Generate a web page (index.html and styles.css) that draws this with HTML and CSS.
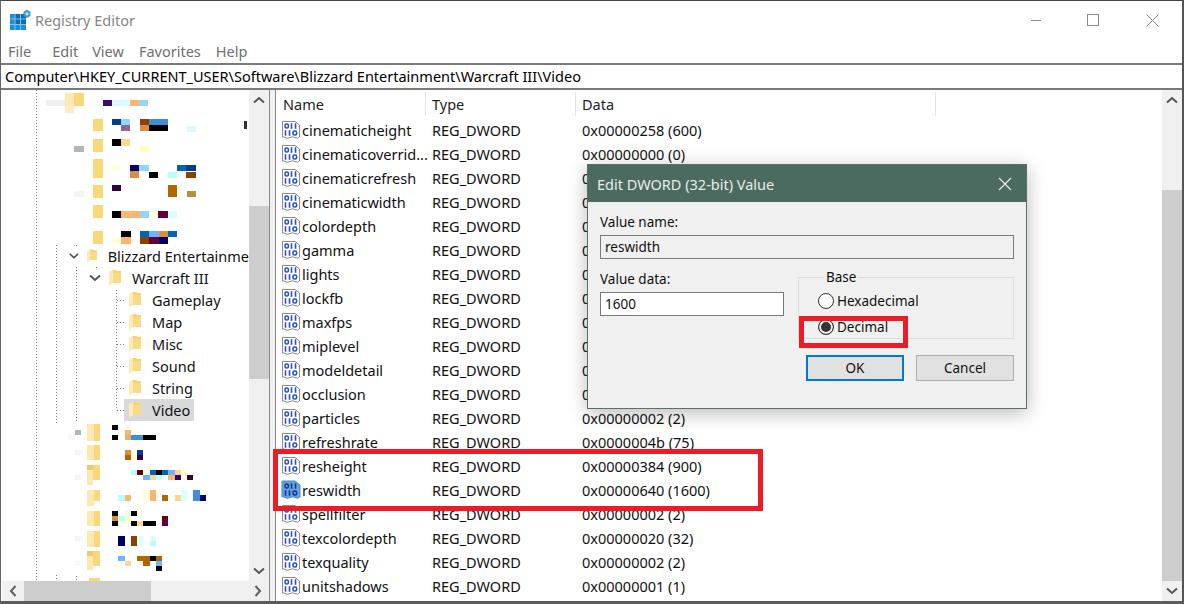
FILE: index.html
```html
<!DOCTYPE html>
<html lang="en">
<head>
    <meta charset="UTF-8">
    <title>Registry Editor</title>
    <link rel="stylesheet" href="styles.css">
</head>
<body>
    <!-- Shared icons -->
    <svg class="defs" width="0" height="0">
        <symbol id="folder" viewBox="0 0 12 16">
            <path d="M3 0 H7 L8 1 H12 V13 H3 Z" fill="#f7d26e"/>
            <path d="M0 1.5 L4 0 V13 L0 16 Z" fill="#fdeab8"/>
            <path d="M4 3 H12 V13 H4 Z" fill="#fadb85"/>
        </symbol>
        <symbol id="dword" viewBox="0 0 20 20">
            <path d="M1.5 1.5 H14 L18.5 5 V17 Q16.5 19 14 17.5 T9 17.5 T4 17.5 T1.5 17 Z" fill="#fff" stroke="#8c8c8c"/>
            <g fill="none" stroke="#2c52ba" stroke-width="1.6">
                <rect x="4" y="4" width="3.4" height="4" rx="1.5"/>
                <path d="M10.5 3.2 V8.8 M14.5 3.2 V8.8"/>
                <path d="M4.5 10.2 V15.8 M8.5 10.2 V15.8"/>
                <rect x="12" y="11" width="3.6" height="4" rx="1.5"/>
            </g>
        </symbol>
        <symbol id="dword-selected" viewBox="0 0 20 20">
            <path d="M1 1 H14 L19 5 V17 Q16.5 19 14 17.5 T9 17.5 T4 17.5 T1 17 Z" fill="#63a5e0" stroke="#4a86c5"/>
            <g fill="none" stroke="#17358f" stroke-width="1.6">
                <rect x="4" y="4" width="3.4" height="4" rx="1.5"/>
                <path d="M10.5 3.2 V8.8 M14.5 3.2 V8.8"/>
                <path d="M4.5 10.2 V15.8 M8.5 10.2 V15.8"/>
                <rect x="12" y="11" width="3.6" height="4" rx="1.5"/>
            </g>
        </symbol>
        <symbol id="chevron-down" viewBox="0 0 12 8">
            <path d="M1 1.5 L6 6 L11 1.5" fill="none" stroke="#555" stroke-width="2"/>
        </symbol>
        <symbol id="chevron-up" viewBox="0 0 12 8">
            <path d="M1 6.5 L6 2 L11 6.5" fill="none" stroke="#555" stroke-width="2"/>
        </symbol>
        <symbol id="chevron-left" viewBox="0 0 8 12">
            <path d="M6.5 1 L2 6 L6.5 11" fill="none" stroke="#606060" stroke-width="2"/>
        </symbol>
        <symbol id="chevron-right" viewBox="0 0 8 12">
            <path d="M1.5 1 L6 6 L1.5 11" fill="none" stroke="#606060" stroke-width="2"/>
        </symbol>
    </svg>

    <div class="window">
        <!-- Title bar -->
        <div class="titlebar">
            <svg class="app-icon" width="22" height="22" viewBox="0 0 22 22">
                <rect x="1" y="5" width="16" height="16" fill="#1c8fd6"/>
                <rect x="6" y="5" width="11" height="10" fill="#0f6cb0"/>
                <path d="M1 10 H17 M1 15.500 H17 M6 5 V21 M11.500 5 V21" stroke="#7cc4ee" stroke-width="1"/>
                <path d="M18 0.500 L21.500 3 V7 L18 9 L14.500 7 V3 Z" fill="#3e9bd4"/>
                <circle cx="18" cy="4.800" r="1.600" fill="#bfe2f6"/>
            </svg>
            <span class="app-title">Registry Editor</span>
            <div class="win-controls">
                <span class="win-min"></span>
                <span class="win-max"></span>
                <svg class="win-close" width="13" height="13" viewBox="0 0 13 13">
                    <path d="M0.500 0.500 L12.500 12.500 M12.500 0.500 L0.500 12.500" stroke="#8c8c8c" stroke-width="1"/>
                </svg>
            </div>
        </div>

        <!-- Menu -->
        <div class="menubar">
            <span class="menu-file">File</span>
            <span class="menu-edit">Edit</span>
            <span class="menu-view">View</span>
            <span class="menu-fav">Favorites</span>
            <span>Help</span>
        </div>

        <!-- Address bar -->
        <div class="address">Computer\HKEY_CURRENT_USER\Software\Blizzard Entertainment\Warcraft III\Video</div>

        <div class="main">
            <!-- Key tree -->
            <div class="tree-pane">
                <div class="tree-top">
                    <div class="tree">
                        <svg class="tree-lines" width="247" height="491" viewBox="2 90 247 491">
                            <g fill="none" stroke="#808080" stroke-dasharray="1 2">
                                <path d="M36.500 90 V581"/>
                                <path d="M56.500 245 V424 M56.500 575 V581"/>
                                <path d="M76.500 245 V248 M76.500 267 V421 M76.500 576 V581"/>
                                <path d="M96.500 267 V270"/>
                                <path d="M116.500 290 V410"/>
                                <path d="M117 300.500 H126 M117 322.500 H126 M117 344.500 H126 M117 366.500 H126 M117 388.500 H126 M117 410.500 H126"/>
                            </g>
                        </svg>

                        <!-- Blurred keys above the open branch -->
                        <svg class="mosaic" viewBox="2 91 247 22">
                            <rect x="46" y="100" width="19" height="6" fill="#eeeeee"/>
                            <rect x="65" y="93" width="9" height="13" fill="#fde9b0"/>
                            <rect x="74" y="93" width="10" height="13" fill="#fad77b"/>
                            <rect x="65" y="106" width="9" height="7" fill="#fdeec5"/>
                            <rect x="103" y="100" width="9" height="6" fill="#3b0b6b"/>
                            <rect x="112" y="100" width="18" height="6" fill="#d9fbff"/>
                            <rect x="130" y="100" width="9" height="6" fill="#ffb56b"/>
                            <rect x="139" y="100" width="9" height="6" fill="#92d5ff"/>
                        </svg>
                        <svg class="mosaic" viewBox="2 113 247 22">
                            <rect x="93" y="119" width="10" height="12" fill="#f9d877"/>
                            <rect x="112" y="119" width="9" height="6" fill="#003d96"/>
                            <rect x="121" y="119" width="9" height="6" fill="#92d5ff"/>
                            <rect x="121" y="125" width="9" height="6" fill="#90649a"/>
                            <rect x="140" y="119" width="9" height="6" fill="#8f3f00"/>
                            <rect x="149" y="119" width="19" height="6" fill="#3d8fdb"/>
                            <rect x="140" y="125" width="9" height="6" fill="#db8f3d"/>
                            <rect x="149" y="125" width="19" height="6" fill="#000000"/>
                            <rect x="187" y="126" width="9" height="6" fill="#d9fbff"/>
                            <rect x="244" y="121" width="3" height="8" fill="#333333"/>
                        </svg>
                        <svg class="mosaic" viewBox="2 135 247 22">
                            <rect x="74" y="146" width="10" height="6" fill="#b5b5b5"/>
                            <rect x="93" y="139" width="10" height="13" fill="#f9d877"/>
                            <rect x="112" y="139" width="9" height="7" fill="#000000"/>
                            <rect x="121" y="139" width="9" height="7" fill="#fed68f"/>
                            <rect x="140" y="146" width="9" height="6" fill="#ffffb5"/>
                        </svg>
                        <svg class="mosaic" viewBox="2 157 247 22">
                            <rect x="93" y="159" width="10" height="19" fill="#f9d877"/>
                            <rect x="112" y="165" width="9" height="6" fill="#ffffdb"/>
                            <rect x="130" y="165" width="9" height="6" fill="#00006b"/>
                            <rect x="139" y="165" width="10" height="6" fill="#92d5ff"/>
                            <rect x="130" y="171" width="9" height="7" fill="#db8f3d"/>
                            <rect x="149" y="172" width="9" height="6" fill="#000000"/>
                            <rect x="168" y="172" width="9" height="6" fill="#b5ffff"/>
                            <rect x="177" y="165" width="9" height="6" fill="#0065b5"/>
                            <rect x="186" y="165" width="10" height="6" fill="#003d8f"/>
                            <rect x="186" y="172" width="10" height="6" fill="#8f3f00"/>
                        </svg>
                        <svg class="mosaic" viewBox="2 179 247 22">
                            <rect x="74" y="191" width="10" height="6" fill="#f5f5f5"/>
                            <rect x="93" y="185" width="10" height="13" fill="#f9d877"/>
                            <rect x="112" y="185" width="9" height="6" fill="#36003d"/>
                            <rect x="168" y="185" width="9" height="12" fill="#b56500"/>
                            <rect x="187" y="191" width="9" height="6" fill="#b5913d"/>
                        </svg>
                        <svg class="mosaic" viewBox="2 201 247 22">
                            <rect x="93" y="205" width="10" height="13" fill="#f9d877"/>
                            <rect x="112" y="211" width="9" height="7" fill="#000000"/>
                            <rect x="121" y="211" width="19" height="7" fill="#ffb56b"/>
                            <rect x="140" y="211" width="9" height="7" fill="#92d5ff"/>
                            <rect x="149" y="211" width="9" height="7" fill="#ffffdb"/>
                            <rect x="158" y="211" width="10" height="7" fill="#65003d"/>
                            <rect x="168" y="211" width="9" height="7" fill="#dbffff"/>
                        </svg>
                        <svg class="mosaic" viewBox="2 223 247 22">
                            <rect x="93" y="231" width="10" height="13" fill="#f9d877"/>
                            <rect x="121" y="231" width="10" height="6" fill="#000000"/>
                            <rect x="140" y="231" width="9" height="6" fill="#0065b5"/>
                            <rect x="149" y="231" width="10" height="6" fill="#6bb5ff"/>
                            <rect x="159" y="231" width="9" height="6" fill="#db8f3d"/>
                            <rect x="168" y="231" width="9" height="6" fill="#0065b5"/>
                            <rect x="112" y="237" width="9" height="7" fill="#ffffdb"/>
                            <rect x="121" y="237" width="10" height="7" fill="#ffb56b"/>
                            <rect x="140" y="237" width="9" height="7" fill="#8f3f00"/>
                            <rect x="149" y="237" width="10" height="7" fill="#65003d"/>
                            <rect x="159" y="237" width="9" height="7" fill="#00006b"/>
                        </svg>

                        <!-- Open branch -->
                        <div class="key depth-1">
                            <svg class="twist" width="12" height="8"><use href="#chevron-down"/></svg>
                            <svg class="folder" width="12" height="16"><use href="#folder"/></svg>
                            <span class="key-name">Blizzard Entertainme</span>
                        </div>
                        <div class="key depth-2">
                            <svg class="twist" width="12" height="8"><use href="#chevron-down"/></svg>
                            <svg class="folder" width="12" height="16"><use href="#folder"/></svg>
                            <span class="key-name">Warcraft III</span>
                        </div>
                        <div class="key depth-3">
                            <svg class="folder" width="12" height="16"><use href="#folder"/></svg>
                            <span class="key-name">Gameplay</span>
                        </div>
                        <div class="key depth-3">
                            <svg class="folder" width="12" height="16"><use href="#folder"/></svg>
                            <span class="key-name">Map</span>
                        </div>
                        <div class="key depth-3">
                            <svg class="folder" width="12" height="16"><use href="#folder"/></svg>
                            <span class="key-name">Misc</span>
                        </div>
                        <div class="key depth-3">
                            <svg class="folder" width="12" height="16"><use href="#folder"/></svg>
                            <span class="key-name">Sound</span>
                        </div>
                        <div class="key depth-3">
                            <svg class="folder" width="12" height="16"><use href="#folder"/></svg>
                            <span class="key-name">String</span>
                        </div>
                        <div class="key depth-3 selected">
                            <svg class="folder" width="12" height="16"><use href="#folder"/></svg>
                            <span class="key-name">Video</span>
                        </div>

                        <!-- Blurred keys below the open branch -->
                        <svg class="mosaic" viewBox="2 421 247 22">
                            <rect x="68" y="435" width="7" height="5" fill="#f8f8f8"/>
                            <rect x="75" y="430" width="6" height="5" fill="#b5b5b5"/>
                            <rect x="87" y="424" width="7" height="17" fill="#fde9b0"/>
                            <rect x="94" y="424" width="6" height="17" fill="#fad77b"/>
                            <rect x="112" y="425" width="6" height="5" fill="#000000"/>
                            <rect x="112" y="435" width="6" height="5" fill="#000000"/>
                            <rect x="125" y="430" width="6" height="5" fill="#ffb56b"/>
                            <rect x="125" y="435" width="6" height="5" fill="#dbb56b"/>
                            <rect x="131" y="435" width="12" height="5" fill="#3d8fdb"/>
                            <rect x="143" y="435" width="13" height="5" fill="#000000"/>
                        </svg>
                        <svg class="mosaic" viewBox="2 443 247 22">
                            <rect x="75" y="450" width="6" height="5" fill="#f5f5f5"/>
                            <rect x="87" y="445" width="7" height="15" fill="#fde9b0"/>
                            <rect x="94" y="445" width="6" height="15" fill="#fad77b"/>
                            <rect x="125" y="450" width="6" height="5" fill="#db8f3d"/>
                            <rect x="125" y="455" width="6" height="5" fill="#b56500"/>
                            <rect x="131" y="450" width="6" height="10" fill="#ffffdb"/>
                            <rect x="137" y="450" width="6" height="5" fill="#003d8f"/>
                            <rect x="137" y="455" width="6" height="5" fill="#36003d"/>
                        </svg>
                        <svg class="mosaic" viewBox="2 465 247 22">
                            <rect x="75" y="475" width="6" height="5" fill="#f5f5f5"/>
                            <rect x="87" y="465" width="6" height="5" fill="#f0c870"/>
                            <rect x="87" y="470" width="6" height="15" fill="#fde9b0"/>
                            <rect x="93" y="465" width="7" height="15" fill="#fad77b"/>
                            <rect x="131" y="470" width="6" height="5" fill="#b5ffff"/>
                            <rect x="137" y="470" width="6" height="5" fill="#650000"/>
                            <rect x="150" y="470" width="6" height="5" fill="#0065b5"/>
                            <rect x="156" y="470" width="6" height="5" fill="#000000"/>
                            <rect x="162" y="470" width="6" height="5" fill="#0065b5"/>
                            <rect x="168" y="470" width="7" height="5" fill="#6bb5ff"/>
                            <rect x="175" y="470" width="6" height="5" fill="#fed68f"/>
                            <rect x="181" y="470" width="6" height="10" fill="#ffffdb"/>
                            <rect x="143" y="475" width="7" height="5" fill="#6bb5ff"/>
                            <rect x="150" y="475" width="6" height="5" fill="#fed68f"/>
                            <rect x="156" y="475" width="6" height="5" fill="#b5ffff"/>
                            <rect x="168" y="475" width="7" height="5" fill="#ffb56b"/>
                            <rect x="175" y="475" width="6" height="5" fill="#36006b"/>
                            <rect x="187" y="475" width="6" height="5" fill="#36003d"/>
                        </svg>
                        <svg class="mosaic" viewBox="2 487 247 22">
                            <rect x="87" y="490" width="7" height="16" fill="#fde9b0"/>
                            <rect x="94" y="490" width="6" height="11" fill="#fad77b"/>
                            <rect x="118" y="495" width="7" height="6" fill="#b5ffff"/>
                            <rect x="125" y="495" width="6" height="6" fill="#ffb56b"/>
                            <rect x="143" y="490" width="7" height="11" fill="#ffffdb"/>
                            <rect x="150" y="490" width="6" height="11" fill="#ffb56b"/>
                            <rect x="162" y="495" width="6" height="6" fill="#b56500"/>
                            <rect x="175" y="495" width="6" height="6" fill="#fed68f"/>
                            <rect x="181" y="490" width="6" height="11" fill="#dbffff"/>
                            <rect x="193" y="490" width="7" height="11" fill="#3d8fdb"/>
                            <rect x="200" y="495" width="6" height="6" fill="#00006b"/>
                        </svg>
                        <svg class="mosaic" viewBox="2 509 247 22">
                            <rect x="87" y="511" width="7" height="15" fill="#fde9b0"/>
                            <rect x="94" y="511" width="6" height="15" fill="#fad77b"/>
                            <rect x="112" y="511" width="6" height="5" fill="#000000"/>
                            <rect x="125" y="511" width="6" height="5" fill="#dbffff"/>
                            <rect x="131" y="511" width="6" height="5" fill="#000000"/>
                            <rect x="112" y="516" width="6" height="5" fill="#db8f3d"/>
                            <rect x="118" y="516" width="7" height="5" fill="#b5ffff"/>
                            <rect x="125" y="516" width="6" height="5" fill="#ffffb5"/>
                            <rect x="112" y="521" width="6" height="5" fill="#000000"/>
                            <rect x="118" y="521" width="7" height="5" fill="#ffffdb"/>
                            <rect x="131" y="521" width="6" height="5" fill="#000000"/>
                            <rect x="137" y="521" width="6" height="5" fill="#fed68f"/>
                            <rect x="143" y="521" width="13" height="5" fill="#000000"/>
                            <rect x="162" y="516" width="6" height="5" fill="#650000"/>
                            <rect x="162" y="521" width="6" height="5" fill="#65003d"/>
                        </svg>
                        <svg class="mosaic" viewBox="2 531 247 22">
                            <rect x="75" y="536" width="6" height="5" fill="#f5f5f5"/>
                            <rect x="87" y="531" width="7" height="16" fill="#fde9b0"/>
                            <rect x="94" y="531" width="6" height="16" fill="#fad77b"/>
                            <rect x="118" y="536" width="7" height="10" fill="#00006b"/>
                            <rect x="131" y="536" width="6" height="10" fill="#8f3f00"/>
                            <rect x="137" y="536" width="6" height="10" fill="#dbffff"/>
                            <rect x="150" y="536" width="6" height="5" fill="#dbffff"/>
                            <rect x="150" y="541" width="6" height="5" fill="#b5ffff"/>
                        </svg>
                        <svg class="mosaic" viewBox="2 553 247 22">
                            <rect x="75" y="561" width="6" height="5" fill="#f8f8f8"/>
                            <rect x="87" y="551" width="6" height="5" fill="#f0c870"/>
                            <rect x="87" y="556" width="6" height="14" fill="#fde9b0"/>
                            <rect x="93" y="551" width="7" height="15" fill="#fad77b"/>
                            <rect x="118" y="556" width="7" height="5" fill="#6bb5ff"/>
                            <rect x="137" y="556" width="19" height="5" fill="#b56500"/>
                            <rect x="150" y="556" width="6" height="5" fill="#000000"/>
                            <rect x="156" y="556" width="6" height="5" fill="#b56500"/>
                            <rect x="125" y="561" width="6" height="5" fill="#fed68f"/>
                            <rect x="143" y="561" width="7" height="5" fill="#b56500"/>
                            <rect x="156" y="561" width="6" height="5" fill="#6bb5ff"/>
                            <rect x="156" y="566" width="6" height="5" fill="#000000"/>
                        </svg>
                        <svg class="mosaic" viewBox="2 575 247 22">
                            <rect x="89" y="578" width="11" height="3" fill="#f9d877"/>
                        </svg>
                    </div>
                    <div class="vscroll tree-vscroll">
                        <div class="arrow-box"><svg width="12" height="8"><use href="#chevron-up"/></svg></div>
                        <div class="thumb"></div>
                        <div class="arrow-box"><svg width="12" height="8"><use href="#chevron-down"/></svg></div>
                    </div>
                </div>
                <div class="hscroll">
                    <div class="arrow-box side"><svg width="8" height="12"><use href="#chevron-left"/></svg></div>
                    <div class="thumb"></div>
                    <div class="arrow-box side"><svg width="8" height="12"><use href="#chevron-right"/></svg></div>
                </div>
            </div>

            <div class="splitter"></div>

            <!-- Values list -->
            <div class="list-pane">
                <div class="list">
                    <div class="list-head">
                        <span class="col-name">Name</span>
                        <span class="col-type">Type</span>
                        <span class="col-data">Data</span>
                    </div>
                    <div class="row"><svg width="20" height="20"><use href="#dword"/></svg><span class="val-name">cinematicheight</span><span class="val-type">REG_DWORD</span><span>0x00000258 (600)</span></div>
                    <div class="row"><svg width="20" height="20"><use href="#dword"/></svg><span class="val-name">cinematicoverrid...</span><span class="val-type">REG_DWORD</span><span>0x00000000 (0)</span></div>
                    <div class="row"><svg width="20" height="20"><use href="#dword"/></svg><span class="val-name">cinematicrefresh</span><span class="val-type">REG_DWORD</span><span>0</span></div>
                    <div class="row"><svg width="20" height="20"><use href="#dword"/></svg><span class="val-name">cinematicwidth</span><span class="val-type">REG_DWORD</span><span>0</span></div>
                    <div class="row"><svg width="20" height="20"><use href="#dword"/></svg><span class="val-name">colordepth</span><span class="val-type">REG_DWORD</span><span>0</span></div>
                    <div class="row"><svg width="20" height="20"><use href="#dword"/></svg><span class="val-name">gamma</span><span class="val-type">REG_DWORD</span><span>0</span></div>
                    <div class="row"><svg width="20" height="20"><use href="#dword"/></svg><span class="val-name">lights</span><span class="val-type">REG_DWORD</span><span>0</span></div>
                    <div class="row"><svg width="20" height="20"><use href="#dword"/></svg><span class="val-name">lockfb</span><span class="val-type">REG_DWORD</span><span>0</span></div>
                    <div class="row"><svg width="20" height="20"><use href="#dword"/></svg><span class="val-name">maxfps</span><span class="val-type">REG_DWORD</span><span>0</span></div>
                    <div class="row"><svg width="20" height="20"><use href="#dword"/></svg><span class="val-name">miplevel</span><span class="val-type">REG_DWORD</span><span>0</span></div>
                    <div class="row"><svg width="20" height="20"><use href="#dword"/></svg><span class="val-name">modeldetail</span><span class="val-type">REG_DWORD</span><span>0</span></div>
                    <div class="row"><svg width="20" height="20"><use href="#dword"/></svg><span class="val-name">occlusion</span><span class="val-type">REG_DWORD</span><span>0</span></div>
                    <div class="row"><svg width="20" height="20"><use href="#dword"/></svg><span class="val-name">particles</span><span class="val-type">REG_DWORD</span><span>0x00000002 (2)</span></div>
                    <div class="row"><svg width="20" height="20"><use href="#dword"/></svg><span class="val-name">refreshrate</span><span class="val-type">REG_DWORD</span><span>0x0000004b (75)</span></div>
                    <div class="row"><svg width="20" height="20"><use href="#dword"/></svg><span class="val-name">resheight</span><span class="val-type">REG_DWORD</span><span>0x00000384 (900)</span></div>
                    <div class="row"><svg width="20" height="20"><use href="#dword-selected"/></svg><span class="val-name">reswidth</span><span class="val-type">REG_DWORD</span><span>0x00000640 (1600)</span></div>
                    <div class="row"><svg width="20" height="20"><use href="#dword"/></svg><span class="val-name">spellfilter</span><span class="val-type">REG_DWORD</span><span>0x00000002 (2)</span></div>
                    <div class="row"><svg width="20" height="20"><use href="#dword"/></svg><span class="val-name">texcolordepth</span><span class="val-type">REG_DWORD</span><span>0x00000020 (32)</span></div>
                    <div class="row"><svg width="20" height="20"><use href="#dword"/></svg><span class="val-name">texquality</span><span class="val-type">REG_DWORD</span><span>0x00000002 (2)</span></div>
                    <div class="row"><svg width="20" height="20"><use href="#dword"/></svg><span class="val-name">unitshadows</span><span class="val-type">REG_DWORD</span><span>0x00000001 (1)</span></div>
                </div>
                <div class="vscroll list-vscroll">
                    <div class="arrow-box"><svg width="12" height="8"><use href="#chevron-up"/></svg></div>
                    <div class="thumb"></div>
                    <div class="arrow-box"><svg width="12" height="8"><use href="#chevron-down"/></svg></div>
                </div>
            </div>
        </div>

        <!-- Red annotation round the two rows -->
        <div class="mark mark-rows"></div>

        <!-- Edit dialog -->
        <div class="dialog">
            <div class="dialog-title">
                <span>Edit DWORD (32-bit) Value</span>
                <svg width="14" height="14" viewBox="0 0 14 14">
                    <path d="M1 1 L13 13 M13 1 L1 13" stroke="#e6ecea" stroke-width="1.200"/>
                </svg>
            </div>
            <div class="dialog-body">
                <label class="field-label">Value name:</label>
                <div class="text-field disabled">reswidth</div>
                <div class="dialog-mid">
                    <div class="data-col">
                        <label class="field-label">Value data:</label>
                        <div class="text-field">1600</div>
                    </div>
                    <fieldset class="base-box">
                        <legend>Base</legend>
                        <div class="radio-row"><span class="radio"></span>Hexadecimal</div>
                        <div class="radio-row"><span class="radio checked"></span>Decimal</div>
                    </fieldset>
                </div>
                <div class="dialog-buttons">
                    <button type="button" class="btn btn-default">OK</button>
                    <button type="button" class="btn">Cancel</button>
                </div>
            </div>
            <div class="mark mark-decimal"></div>
        </div>
    </div>
</body>
</html>
```

FILE: styles.css
```css
/* General page */
body {
    margin: 0;
    width: 1184px;
    height: 604px;
    overflow: hidden;
    background: #fff;
    font-family: "Noto Sans", "Open Sans", sans-serif;
    font-size: 14.5px;
    color: #111;
}

.defs {
    display: block;
    height: 0;
}

.window {
    position: relative;
    box-sizing: border-box;
    height: 604px;
    border-top: 1px solid #444;
    border-left: 1px solid #666;
    border-right: 2px solid #555;
    border-bottom: 3px solid #5c5c5c;
    display: flex;
    flex-direction: column;
}

/* Title bar */
.titlebar {
    height: 38px;
    display: flex;
    align-items: center;
    padding-left: 8px;
    flex: none;
}

.app-icon {
    margin-right: 4px;
}

.app-title {
    color: #868686;
}

.win-controls {
    margin-left: auto;
    display: flex;
    align-items: center;
    padding-right: 23px;
}

.win-min {
    width: 10px;
    height: 1px;
    background: #8c8c8c;
    margin-right: 46px;
}

.win-max {
    width: 10px;
    height: 10px;
    border: 1px solid #8c8c8c;
    margin-right: 47px;
}

/* Menu */
.menubar {
    height: 24px;
    display: flex;
    align-items: center;
    padding-left: 7px;
    color: #707070;
    flex: none;
}

.menu-file { margin-right: 21px; }
.menu-edit { margin-right: 14px; }
.menu-view { margin-right: 15px; }
.menu-fav { margin-right: 15px; }

/* Address bar */
.address {
    box-sizing: border-box;
    height: 27px;
    flex: none;
    border-top: 2px solid #7a7a7a;
    border-bottom: 2px solid #7a7a7a;
    padding-left: 4px;
    line-height: 23px;
    color: #000;
    white-space: nowrap;
}

.main {
    flex: 1;
    display: flex;
    min-height: 0;
}

/* Tree */
.tree-pane {
    width: 269px;
    flex: none;
    padding-left: 1px;
    box-sizing: border-box;
    border-right: 1px solid #8a8a8a;
    display: flex;
    flex-direction: column;
}

.tree-top {
    height: 491px;
    display: flex;
    flex: none;
}

.tree {
    position: relative;
    width: 247px;
    flex: none;
    padding-top: 1px;
    box-sizing: border-box;
    overflow: hidden;
}

.tree-lines {
    position: absolute;
    left: 0;
    top: 0;
}

.mosaic {
    display: block;
    position: relative;
    width: 247px;
    height: 22px;
    overflow: visible;
}

.key {
    position: relative;
    height: 22px;
    display: flex;
    align-items: center;
    box-sizing: border-box;
    white-space: nowrap;
    color: #111;
}

.twist {
    margin-right: 8px;
}

.folder {
    margin-right: 11px;
}

.depth-1 { padding-left: 67px; }
.depth-2 { padding-left: 87px; }
.depth-3 { padding-left: 127px; }

.key.selected .key-name,
.key.selected {
    background: #d9d9d9;
}

.key.selected {
    width: 70px;
    margin-left: 122px;
    padding-left: 5px;
}

/* Scrollbars */
.vscroll {
    background: #f0f0f0;
    display: flex;
    flex-direction: column;
    flex: none;
}

.tree-vscroll {
    width: 20px;
}

.list-vscroll {
    width: 20px;
    margin-left: auto;
}

.arrow-box {
    height: 20px;
    display: flex;
    align-items: center;
    justify-content: center;
    flex: none;
}

.thumb {
    background: #cdcdcd;
}

.tree-vscroll .arrow-box:first-child {
    margin-bottom: 96px;
}

.tree-vscroll .thumb {
    height: 173px;
}

.tree-vscroll .arrow-box:last-child {
    margin-top: auto;
}

.list-vscroll .arrow-box:first-child {
    margin-bottom: 80px;
}

.list-vscroll .thumb {
    flex: 1;
}

.hscroll {
    flex: 1;
    display: flex;
    background: #f0f0f0;
}

.arrow-box.side {
    width: 22px;
    height: auto;
}

.hscroll .thumb {
    width: 127px;
    margin-right: auto;
}

.splitter {
    width: 5px;
    background: #f0f0f0;
    flex: none;
}

/* Values list */
.list-pane {
    flex: 1;
    display: flex;
    border-left: 1px solid #8a8a8a;
    min-width: 0;
}

.list {
    flex: 1;
    min-width: 0;
    overflow: hidden;
}

.list-head {
    height: 28px;
    display: flex;
    align-items: center;
    color: #222;
}

.col-name,
.col-type {
    width: 150px;
    box-sizing: border-box;
    padding-left: 7px;
    line-height: 24px;
    border-right: 1px solid #e5e5e5;
    flex: none;
}

.col-type {
    padding-left: 6px;
}

.col-data {
    width: 360px;
    box-sizing: border-box;
    padding-left: 6px;
    line-height: 24px;
    border-right: 1px solid #e5e5e5;
}

.row {
    height: 24px;
    display: flex;
    align-items: center;
    white-space: nowrap;
    padding-left: 5px;
    color: #111;
}

.row svg {
    flex: none;
    margin-right: 1px;
}

.val-name {
    width: 130px;
    flex: none;
}

.val-type {
    width: 150px;
    flex: none;
}

/* Red annotation boxes */
.mark {
    position: absolute;
    box-sizing: border-box;
    border: 5px solid #ed1c24;
}

.mark-rows {
    left: 272px;
    top: 448px;
    width: 490px;
    height: 62px;
}

.mark-decimal {
    left: 211px;
    top: 151px;
    width: 109px;
    height: 32px;
}

/* Dialog */
.dialog {
    position: absolute;
    left: 586px;
    top: 163px;
    width: 440px;
    height: 245px;
    box-sizing: border-box;
    border: 1px solid #5c6f67;
    background: #f0f0f0;
    box-shadow: 0 4px 18px rgba(0, 0, 0, 0.28);
    font-size: 13.5px;
}

.dialog-title {
    height: 37px;
    background: #4c6b60;
    color: #e6ecea;
    display: flex;
    align-items: center;
    justify-content: space-between;
    padding: 0 14px 0 9px;
    font-size: 14.5px;
}

.dialog-body {
    padding: 11px 12px 0;
}

.field-label {
    display: block;
    line-height: 18px;
    margin-bottom: 4px;
    color: #111;
}

.text-field {
    box-sizing: border-box;
    height: 24px;
    border: 1px solid #7a7a7a;
    background: #fff;
    padding-left: 4px;
    line-height: 22px;
}

.text-field.disabled {
    background: #f0f0f0;
    width: 414px;
}

.dialog-mid {
    display: flex;
    margin-top: 11px;
}

.data-col {
    width: 184px;
    margin-right: 14px;
}

.base-box {
    width: 216px;
    height: 69px;
    box-sizing: border-box;
    border: 1px solid #dcdcdc;
    margin: 0;
    padding: 4px 0 0 19px;
}

.base-box legend {
    padding: 0 2px;
    margin-left: 6px;
    line-height: 14px;
}

.radio-row {
    height: 26px;
    display: flex;
    align-items: center;
}

.radio {
    box-sizing: border-box;
    width: 16px;
    height: 16px;
    border: 1px solid #333;
    border-radius: 50%;
    background: #fff;
    margin-right: 3px;
    flex: none;
}

.radio.checked {
    background: #333;
    box-shadow: inset 0 0 0 2px #f0f0f0;
}

.dialog-buttons {
    display: flex;
    justify-content: flex-end;
    gap: 12px;
    margin-top: 16px;
}

.btn {
    width: 98px;
    height: 26px;
    box-sizing: border-box;
    background: #e1e1e1;
    border: 1px solid #adadad;
    font: inherit;
    color: #111;
    padding: 0;
}

.btn-default {
    border: 2px solid #0078d7;
}
```
